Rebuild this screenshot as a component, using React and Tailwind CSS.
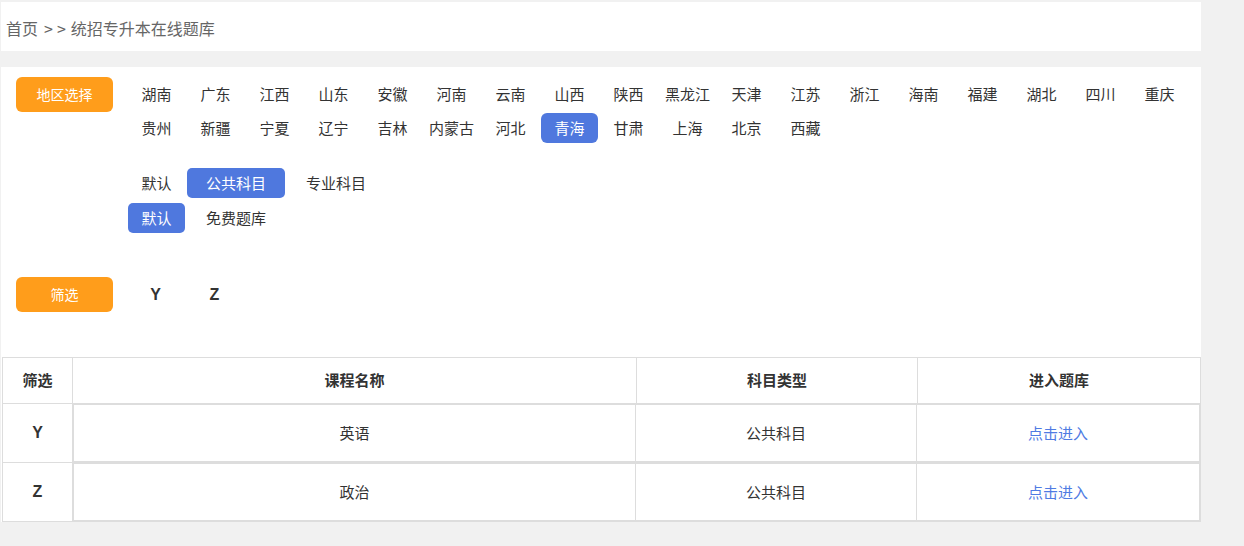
const regions1 = ["湖南", "广东", "江西", "山东", "安徽", "河南", "云南", "山西", "陕西", "黑龙江", "天津", "江苏", "浙江", "海南", "福建", "湖北", "四川", "重庆"];
const regions2 = ["贵州", "新疆", "宁夏", "辽宁", "吉林", "内蒙古", "河北", "青海", "甘肃", "上海", "北京", "西藏"];

const rows = [
  { letter: "Y", name: "英语", type: "公共科目" },
  { letter: "Z", name: "政治", type: "公共科目" },
];

function Tab({ label, active, wide }) {
  return (
    <div
      className={
        (wide ? "w-[98px] " : "w-[57px] ") +
        "mx-px h-[30px] flex items-center justify-center rounded-[5px] text-[15px] " +
        (active ? "bg-[#4f78de] text-white" : "text-[#333]")
      }
    >
      {label}
    </div>
  );
}

export default function App() {
  const font = { fontFamily: '"Noto Sans CJK SC", "Liberation Sans", sans-serif' };

  return (
    <div className="min-h-screen w-full bg-[#f1f1f1] pt-[2px]" style={font}>
      <div className="ml-px w-[1200px]">
        <div className="h-[49px] bg-white flex items-center pl-[5px] pt-[2px] text-[16px] text-[#666]">
          首页 <span className="ml-[6px] mr-[1px] tracking-[4px]">&gt;&gt;</span>统招专升本在线题库
        </div>

        <div className="mt-[16px] bg-white pt-[10px]">
          {/* region select */}
          <div className="flex">
            <div className="ml-[15px] w-[97px] h-[35px] shrink-0 rounded-[6px] bg-[#ff9d1b] text-white text-[14px] flex items-center justify-center">
              地区选择
            </div>
            <div className="ml-[14px] w-[1064px]">
              <div className="flex">
                {regions1.map((r) => (
                  <div key={r} className="w-[57px] mx-px my-[2px] h-[30px] flex items-center justify-center text-[15px] text-[#333]">
                    {r}
                  </div>
                ))}
              </div>
              <div className="flex">
                {regions2.map((r) => (
                  <div
                    key={r}
                    className={
                      "w-[57px] mx-px my-[2px] h-[30px] flex items-center justify-center rounded-[6px] text-[15px] " +
                      (r === "青海" ? "bg-[#4f78de] text-white" : "text-[#333]")
                    }
                  >
                    {r}
                  </div>
                ))}
              </div>
            </div>
          </div>

          {/* subject tabs */}
          <div className="ml-[126px] mt-[23px]">
            <div className="flex">
              <Tab label="默认" />
              <Tab label="公共科目" active wide />
              <Tab label="专业科目" wide />
            </div>
            <div className="flex mt-[5px]">
              <Tab label="默认" active />
              <Tab label="免费题库" wide />
            </div>
          </div>

          {/* filter */}
          <div className="flex mt-[44px] items-center">
            <div className="ml-[15px] w-[97px] h-[35px] shrink-0 rounded-[6px] bg-[#ff9d1b] text-white text-[14px] flex items-center justify-center">
              筛选
            </div>
            <div className="ml-[13px] flex">
              {["Y", "Z"].map((l) => (
                <div key={l} className="w-[57px] mx-px h-[30px] flex items-center justify-center text-[16px] font-bold text-[#333]" style={{ fontFamily: '"Liberation Sans", sans-serif' }}>
                  {l}
                </div>
              ))}
            </div>
          </div>

          {/* table */}
          <div className="mt-[45px] ml-px w-[1199px] border border-[#ddd] text-[15px] text-[#333]">
            <div className="flex h-[45px] font-bold">
              <div className="w-[69px] flex items-center justify-center">筛选</div>
              <div className="w-[564px] border-l border-[#ddd] flex items-center justify-center">课程名称</div>
              <div className="w-[281px] border-l border-[#ddd] flex items-center justify-center">科目类型</div>
              <div className="flex-1 border-l border-[#ddd] flex items-center justify-center">进入题库</div>
            </div>
            {rows.map((row) => (
              <div key={row.letter} className="flex border-t border-[#ddd]">
                <div className="w-[69px] flex items-center justify-center text-[16px] font-bold" style={{ fontFamily: '"Liberation Sans", sans-serif' }}>
                  {row.letter}
                </div>
                <div className="flex-1 border-l border-[#ddd]">
                  <div className="flex h-[58px] border border-[#ddd]">
                    <div className="w-[561px] flex items-center justify-center">{row.name}</div>
                    <div className="w-[281px] border-l border-[#ddd] flex items-center justify-center">{row.type}</div>
                    <div className="flex-1 border-l border-[#ddd] flex items-center justify-center text-[#4f7be3] cursor-pointer">
                      点击进入
                    </div>
                  </div>
                </div>
              </div>
            ))}
          </div>
        </div>
      </div>
    </div>
  );
}
